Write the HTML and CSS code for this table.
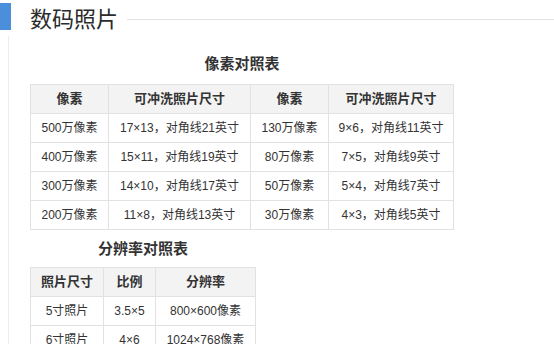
FILE: index.html
```html
<!DOCTYPE html>
<html lang="zh">
<head>
<meta charset="utf-8">
<title>数码照片</title>
<link rel="stylesheet" href="styles.css">
</head>
<body>
<div class="head">
  <span class="mark"></span>
  <h2 class="title">数码照片</h2>
  <span class="rule"></span>
</div>
<div class="content">
  <table class="tbl t1">
    <caption>像素对照表</caption>
    <colgroup><col class="c78"><col class="c142"><col class="c78"><col class="c125"></colgroup>
    <tr><th>像素</th><th>可冲洗照片尺寸</th><th>像素</th><th>可冲洗照片尺寸</th></tr>
    <tr><td>500万像素</td><td>17×13，对角线21英寸</td><td>130万像素</td><td>9×6，对角线11英寸</td></tr>
    <tr><td>400万像素</td><td>15×11，对角线19英寸</td><td>80万像素</td><td>7×5，对角线9英寸</td></tr>
    <tr><td>300万像素</td><td>14×10，对角线17英寸</td><td>50万像素</td><td>5×4，对角线7英寸</td></tr>
    <tr><td>200万像素</td><td>11×8，对角线13英寸</td><td>30万像素</td><td>4×3，对角线5英寸</td></tr>
  </table>
  <table class="tbl t2">
    <caption>分辨率对照表</caption>
    <colgroup><col class="c73"><col class="c52"><col class="c100"></colgroup>
    <tr><th>照片尺寸</th><th>比例</th><th>分辨率</th></tr>
    <tr><td>5寸照片</td><td>3.5×5</td><td>800×600像素</td></tr>
    <tr><td>6寸照片</td><td>4×6</td><td>1024×768像素</td></tr>
  </table>
</div>
</body>
</html>
```
FILE: styles.css
```css
html, body {
  margin: 0;
  padding: 0;
  background: #fff;
}
body {
  font-family: "Liberation Sans", "Noto Sans CJK SC", sans-serif;
  color: #333;
  overflow: hidden;
}
.head {
  display: flex;
  align-items: center;
  height: 36px;
}
.mark {
  width: 11px;
  height: 27px;
  background: #4b8fdc;
  margin-top: -3px;
  flex: none;
}
.title {
  margin: 0 0 0 19px;
  font-family: "Noto Sans CJK SC", sans-serif;
  font-size: 22px;
  font-weight: normal;
  line-height: 30px;
  color: #2b2b2b;
  margin-top: -2px;
  flex: none;
}
.rule {
  flex: 1;
  height: 1px;
  background: #e2e2e2;
  margin-left: 9px;
  margin-top: 2px;
}
.content {
  margin-left: 8px;
  border-left: 1px solid #ededed;
  padding-left: 21px;
  padding-bottom: 40px;
}
.tbl {
  border-collapse: collapse;
  table-layout: fixed;
}
.tbl caption {
  font-family: "Noto Sans CJK SC", sans-serif;
  font-size: 15px;
  font-weight: bold;
  line-height: 20px;
  color: #333;
}
.t1 caption {
  padding: 17px 0 11px;
}
.t2 caption {
  padding: 8px 0 9px;
}
.tbl th, .tbl td {
  border: 1px solid #e2e2e2;
  height: 28px;
  padding: 0;
  line-height: 18px;
  text-align: center;
  vertical-align: middle;
  white-space: nowrap;
}
.tbl th {
  background: #f3f3f3;
  font-size: 13px;
  font-weight: bold;
  color: #333;
}
.tbl td {
  font-size: 12px;
  color: #333;
}
.c78 { width: 78px; }
.c142 { width: 142px; }
.c125 { width: 125px; }
.c73 { width: 73px; }
.c52 { width: 52px; }
.c100 { width: 100px; }
```
